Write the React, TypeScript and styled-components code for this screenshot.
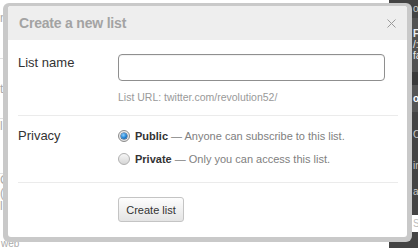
import React from "react";
import styled, { createGlobalStyle } from "styled-components";

const Global = createGlobalStyle`
  html, body { margin: 0; padding: 0; background: #fff; }
  body { font-family: "Liberation Sans", Arial, sans-serif; }
  * { box-sizing: border-box; }
`;

const Page = styled.div`
  position: relative;
  width: 418px;
  height: 248px;
  overflow: hidden;
  display: flex;
  background: #fff;
`;

const LeftPane = styled.div`
  flex: 1;
  display: flex;
  flex-direction: column;
  color: #aaa;
  font-size: 12px;
`;

const Frag = styled.div<{ $h: number; $line?: boolean }>`
  height: ${(p) => p.$h}px;
  width: 3px;
  overflow: hidden;
  white-space: nowrap;
  line-height: ${(p) => p.$h}px;
  border-bottom: ${(p) => (p.$line ? "1px solid #e2e2e2" : "none")};
`;

const BottomWord = styled.div`
  margin-top: auto;
  height: 8px;
  line-height: 8px;
  font-size: 10px;
  color: #aaa;
  padding-left: 1px;
`;

const RightPane = styled.div`
  width: 29px;
  display: flex;
  flex-direction: column;
  background: #434343;
  color: #ddd;
  font-size: 10px;
  overflow: hidden;
`;

const Band = styled.div<{ $h: number; $bg: string; $color?: string; $bold?: boolean }>`
  height: ${(p) => p.$h}px;
  background: ${(p) => p.$bg};
  color: ${(p) => p.$color || "#ccc"};
  font-weight: ${(p) => (p.$bold ? "bold" : "normal")};
  padding-left: 24px;
  display: flex;
  flex-direction: column;
  justify-content: center;
  gap: 3px;
  line-height: 8px;
  white-space: nowrap;
`;

const Frame = styled.div`
  position: absolute;
  left: 3px;
  top: 3px;
  width: 409px;
  height: 239px;
  background: #c9c9c9;
  border-radius: 6px;
  padding: 3px 5px 5px 5px;
`;

const Dialog = styled.div`
  width: 100%;
  height: 100%;
  background: #fff;
  border-radius: 3px;
  overflow: hidden;
  display: flex;
  flex-direction: column;
`;

const TitleBar = styled.div`
  height: 34px;
  background: #eeeeee;
  display: flex;
  align-items: center;
  justify-content: space-between;
  padding: 0 11px 0 11px;
`;

const Title = styled.h3`
  margin: 0;
  font-size: 14px;
  font-weight: bold;
  color: #a3a3a3;
  line-height: 34px;
  letter-spacing: -0.2px;
`;

const Close = styled.svg`
  width: 9px;
  height: 9px;
  margin-top: 1px;
`;

const Body = styled.div`
  padding: 0 9px 0 10px;
  display: flex;
  flex-direction: column;
`;

const Row = styled.div<{ $pt: number; $pb: number; $last?: boolean }>`
  display: flex;
  padding-top: ${(p) => p.$pt}px;
  padding-bottom: ${(p) => p.$pb}px;
  border-bottom: ${(p) => (p.$last ? "none" : "1px solid #ebebeb")};
`;

const Label = styled.div`
  width: 100px;
  flex-shrink: 0;
  font-size: 13px;
  line-height: 16px;
  color: #333;
  padding-top: 1px;
`;

const Field = styled.div`
  display: flex;
  flex-direction: column;
`;

const Input = styled.input`
  width: 267px;
  height: 27px;
  border: 1px solid #8f8f8f;
  border-radius: 4px;
  padding: 0 6px;
  font-family: inherit;
  font-size: 13px;
  outline: none;
  box-shadow: inset 0 1px 1px rgba(0, 0, 0, 0.06);
`;

const Hint = styled.div`
  margin-top: 9px;
  font-size: 10.5px;
  line-height: 14px;
  color: #999;
`;

const Options = styled.div`
  display: flex;
  flex-direction: column;
  gap: 5px;
`;

const Option = styled.label`
  display: flex;
  align-items: center;
  height: 18px;
  font-size: 11px;
  color: #808080;
  white-space: nowrap;
`;

const Radio = styled.span<{ $checked?: boolean }>`
  position: relative;
  width: 12px;
  height: 12px;
  border-radius: 50%;
  margin-right: 5px;
  border: 1px solid ${(p) => (p.$checked ? "#8c8c8c" : "#b0b0b0")};
  background: ${(p) =>
    p.$checked
      ? "radial-gradient(circle at 50% 40%, #ffffff 0%, #e4e4e4 70%, #c8c8c8 100%)"
      : "linear-gradient(#f7f7f7, #d6d6d6)"};
  flex-shrink: 0;

  &::after {
    content: "";
    display: ${(p) => (p.$checked ? "block" : "none")};
    position: absolute;
    left: 2px;
    top: 2px;
    width: 6px;
    height: 6px;
    border-radius: 50%;
    background: radial-gradient(circle at 40% 35%, #8fd0ff 0%, #1d7fd0 55%, #0a4b8f 100%);
    box-shadow: 0 0 0 0.5px #1c3f6e;
  }
`;

const Strong = styled.b`
  color: #333;
  font-weight: bold;
`;

const Button = styled.button`
  margin-left: 100px;
  width: 66px;
  height: 25px;
  border: 1px solid #c4c4c4;
  border-radius: 3px;
  background: linear-gradient(#fdfdfd, #e4e4e4);
  font-family: inherit;
  font-size: 11px;
  color: #333;
  padding: 0;
  cursor: pointer;
`;

export default function App() {
  return (
    <>
      <Global />
      <Page>
        <LeftPane>
          <Frag $h={36}>n</Frag>
          <Frag $h={23} $line />
          <Frag $h={60} $line>t</Frag>
          <Frag $h={15}>l</Frag>
          <Frag $h={40} $line />
          <Frag $h={13}>G</Frag>
          <Frag $h={13}>(</Frag>
          <Frag $h={13}>l</Frag>
          <BottomWord>web</BottomWord>
        </LeftPane>
        <RightPane>
          <Band $h={18} $bg="#444">oll</Band>
          <Band $h={54} $bg="#525252" $color="#eee">
            <span style={{ fontWeight: "bold" }}>F</span>
            <span>/:</span>
            <span>fa</span>
          </Band>
          <Band $h={13} $bg="#3a3a3a" />
          <Band $h={27} $bg="#555" $color="#fff" $bold>o</Band>
          <Band $h={103} $bg="#444">
            <span>O</span>
            <span style={{ marginTop: 20 }}>in</span>
            <span style={{ marginTop: 15 }}>a</span>
          </Band>
          <Band $h={17} $bg="#fff" $color="#bbb">S</Band>
          <Band $h={16} $bg="#444" />
        </RightPane>

        <Frame>
          <Dialog>
            <TitleBar>
              <Title>Create a new list</Title>
              <Close viewBox="0 0 9 9">
                <path d="M0.5 0.5 L8.5 8.5 M8.5 0.5 L0.5 8.5" stroke="#9a9a9a" strokeWidth="1" fill="none" />
              </Close>
            </TitleBar>
            <Body>
              <Row $pt={14} $pb={11}>
                <Label>List name</Label>
                <Field>
                  <Input type="text" />
                  <Hint>List URL: twitter.com/revolution52/</Hint>
                </Field>
              </Row>
              <Row $pt={11} $pb={14}>
                <Label>Privacy</Label>
                <Options>
                  <Option>
                    <Radio $checked />
                    <Strong>Public</Strong>&nbsp;— Anyone can subscribe to this list.
                  </Option>
                  <Option>
                    <Radio />
                    <Strong>Private</Strong>&nbsp;— Only you can access this list.
                  </Option>
                </Options>
              </Row>
              <Row $pt={14} $pb={0} $last>
                <Button>Create list</Button>
              </Row>
            </Body>
          </Dialog>
        </Frame>
      </Page>
    </>
  );
}
